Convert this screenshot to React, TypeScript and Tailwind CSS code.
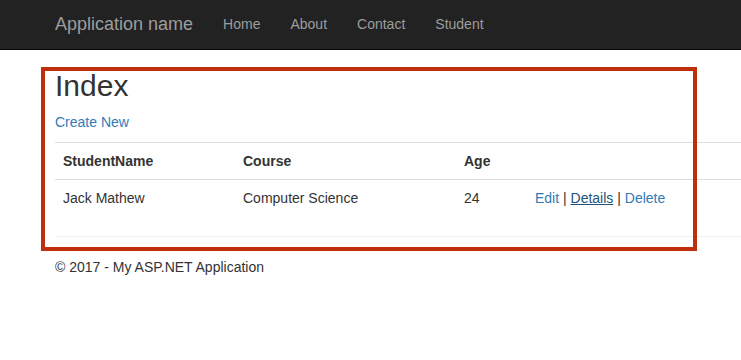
import React from "react";

export default function App() {
  const font = { fontFamily: '"Liberation Sans", Arial, Helvetica, sans-serif' };
  return (
    <div className="relative w-[741px] h-[360px] overflow-hidden bg-white text-[14px] leading-[20px] text-[#333]" style={font}>
      <nav className="h-[50px] bg-[#222] border-b border-[#080808] flex items-start pl-[40px]">
        <span className="px-[15px] pt-[14px] text-[18px] leading-[20px] text-[#9d9d9d]">Application name</span>
        <ul className="flex">
          <li className="px-[15px] pt-[14px] leading-[20px] text-[#9d9d9d]">Home</li>
          <li className="px-[15px] pt-[14px] leading-[20px] text-[#9d9d9d]">About</li>
          <li className="px-[15px] pt-[14px] leading-[20px] text-[#9d9d9d]">Contact</li>
          <li className="px-[15px] pt-[14px] leading-[20px] text-[#9d9d9d]">Student</li>
        </ul>
      </nav>
      <div className="pl-[55px]">
        <h2 className="mt-[19px] mb-[10px] text-[30px] leading-[33px] font-normal text-[#333]">Index</h2>
        <p className="mb-[10px]">
          <a className="text-[#337ab7]">Create New</a>
        </p>
        <table className="w-[720px] border-collapse mb-[20px]">
          <tbody>
            <tr>
              <th className="w-[180px] text-left font-bold p-[8px] border-t border-[#ddd]">StudentName</th>
              <th className="w-[221px] text-left font-bold p-[8px] border-t border-[#ddd]">Course</th>
              <th className="w-[71px] text-left font-bold p-[8px] border-t border-[#ddd]">Age</th>
              <th className="p-[8px] border-t border-[#ddd]"></th>
            </tr>
            <tr>
              <td className="p-[8px] border-t border-[#ddd]">Jack Mathew</td>
              <td className="p-[8px] border-t border-[#ddd]">Computer Science</td>
              <td className="p-[8px] border-t border-[#ddd]">24</td>
              <td className="p-[8px] border-t border-[#ddd]">
                <a className="text-[#337ab7]">Edit</a> | <a className="text-[#23527c] underline">Details</a> | <a className="text-[#337ab7]">Delete</a>
              </td>
            </tr>
          </tbody>
        </table>
        <hr className="w-[720px] border-0 border-t border-[#eee] mb-[20px]" />
        <footer>
          <p>© 2017 - My ASP.NET Application</p>
        </footer>
      </div>
      <div className="absolute left-[41px] top-[67px] w-[656px] h-[184px] border-4 border-[#bf2f0b] pointer-events-none"></div>
    </div>
  );
}
